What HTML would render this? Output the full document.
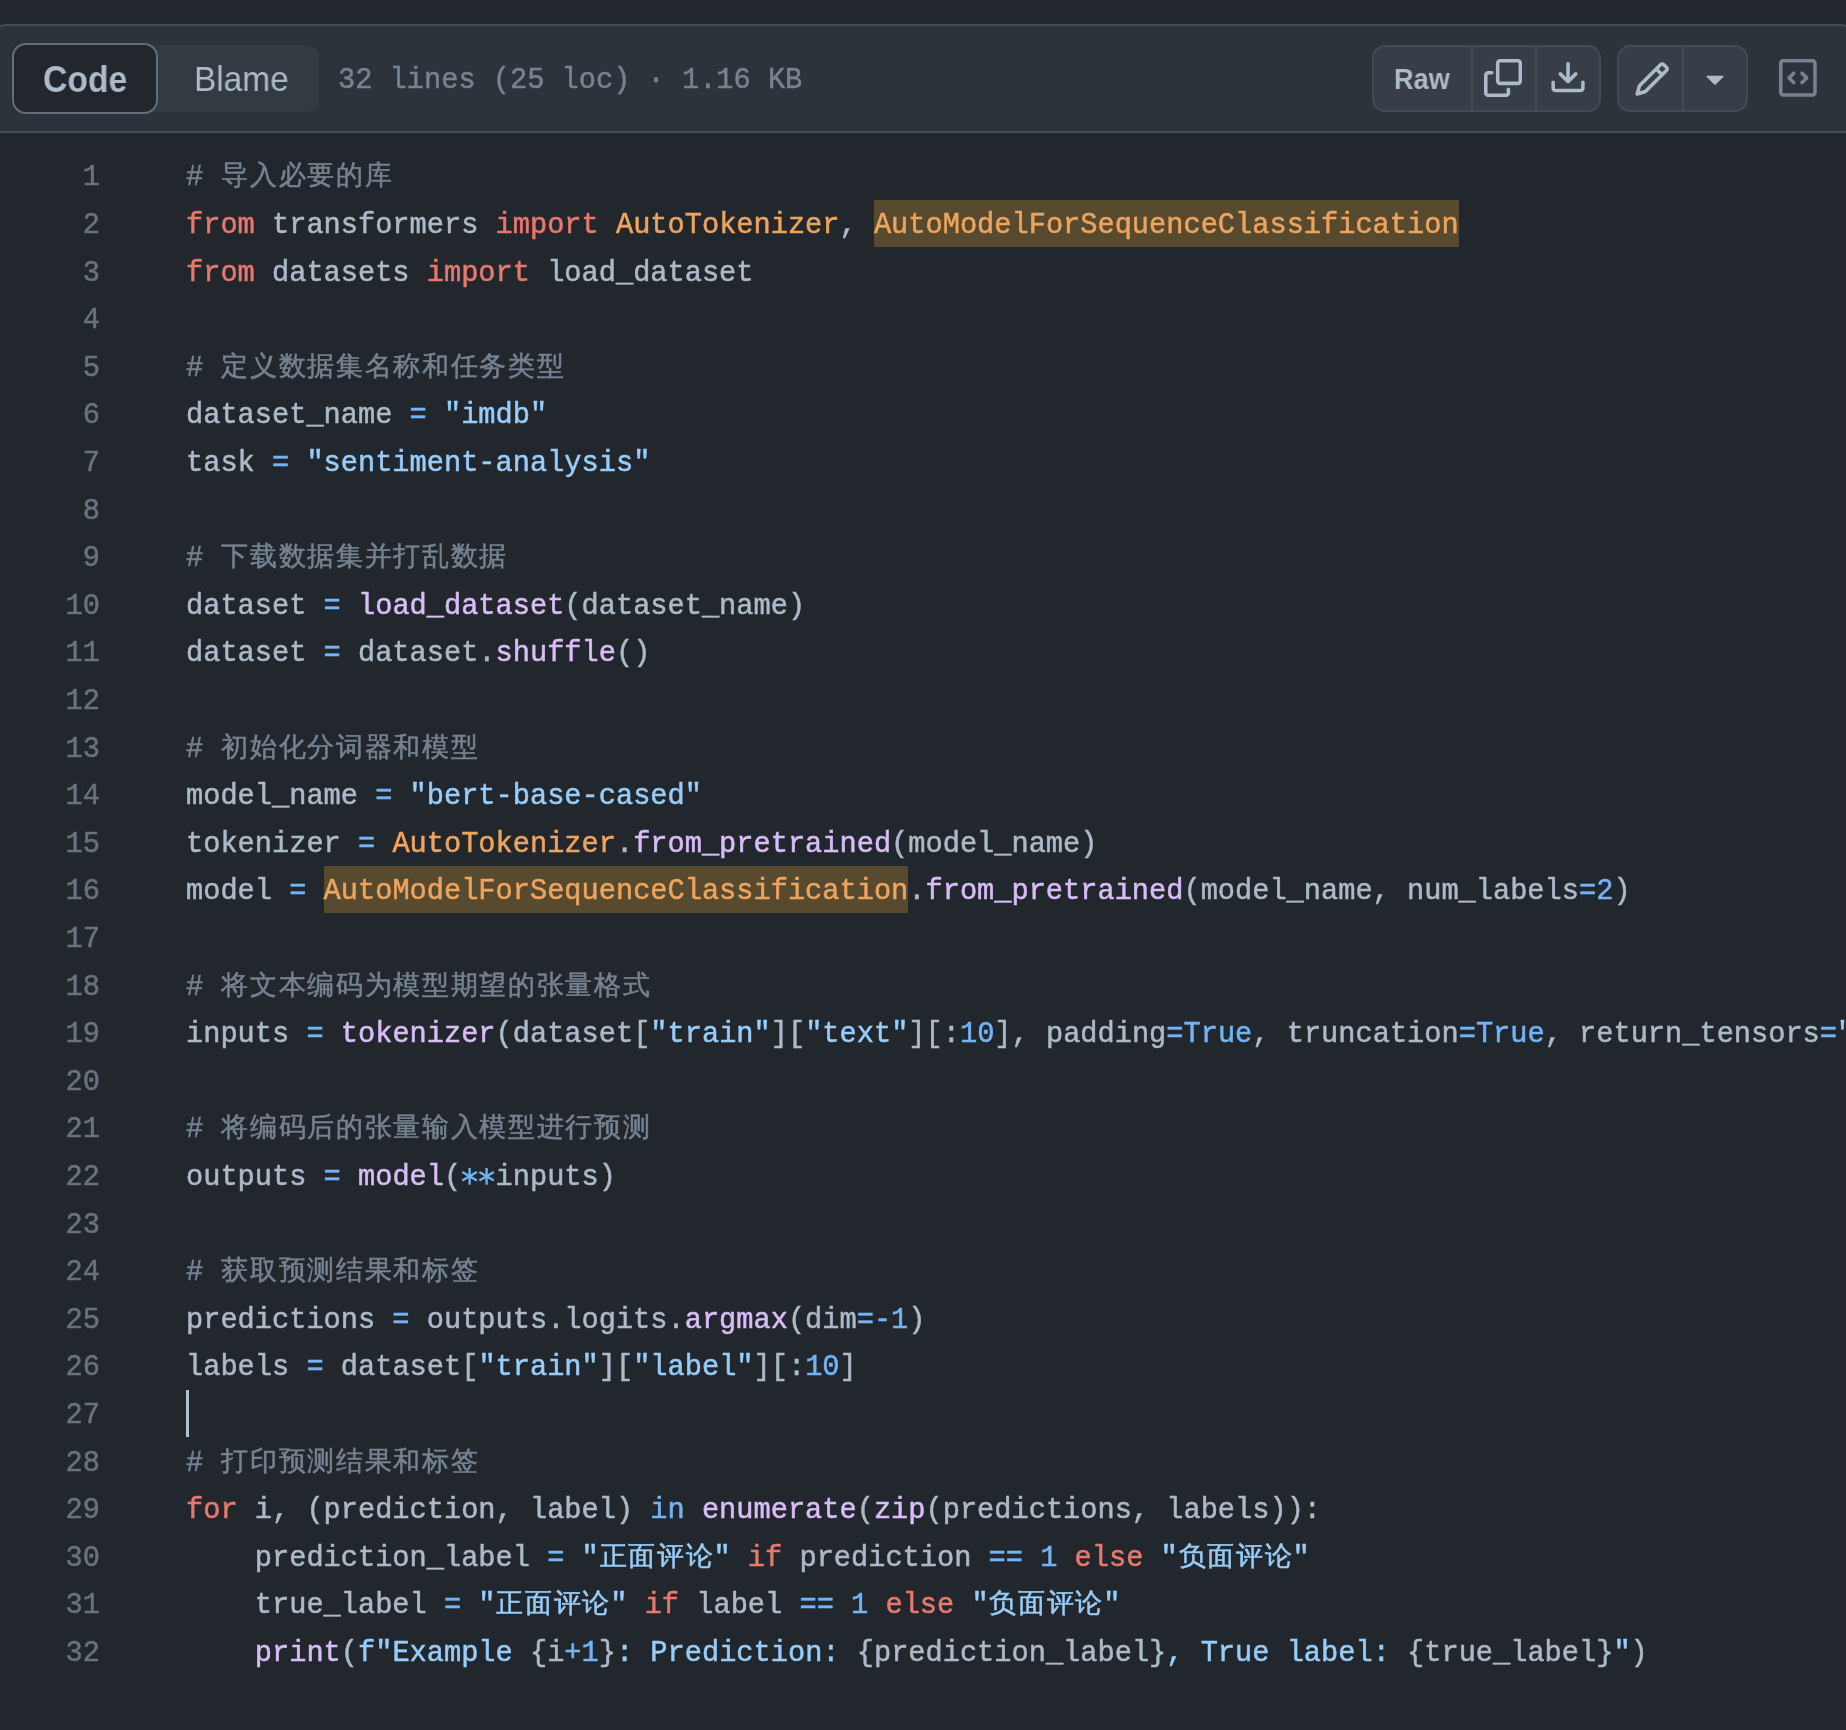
<!DOCTYPE html>
<html><head><meta charset="utf-8"><style>
html,body{margin:0;padding:0;background:#22272e;overflow:hidden}
body{width:1846px;height:1730px}
.root{width:1846px;height:1730px;background:#22272e;overflow:hidden;position:relative;font-family:"Liberation Sans",sans-serif}
.hdr{position:absolute;left:-8px;top:24px;width:1858px;height:105px;background:#2d333b;border:2px solid #444c56;border-radius:14px 14px 0 0}
.seg{position:absolute;left:12px;top:45px;width:307px;height:67px;background:#343a42;border-radius:13px}
.codebtn{position:absolute;left:12px;top:43px;width:142px;height:67px;background:#22272e;border:2px solid #636e7b;border-radius:14px}
.lbl{position:absolute;color:#adbac7;white-space:pre;line-height:1;will-change:transform}
.meta{position:absolute;left:338px;top:57px;-webkit-text-stroke:0.5px currentColor;will-change:transform;font-family:"Liberation Mono",monospace;font-size:28.667px;line-height:47.6px;color:#768390;white-space:pre}
.grp{position:absolute;top:44.5px;height:63.5px;background:#373e47;border:2px solid #444b55;border-radius:13px}
.div{position:absolute;top:46px;width:2px;height:64px;background:#444b55}
.ic{position:absolute}
.ln{position:absolute;left:0;height:47.6px;width:1846px;font-family:"Liberation Mono",monospace;font-size:28.667px;line-height:47.6px;white-space:pre;color:#adbac7;-webkit-text-stroke:0.5px currentColor;will-change:transform}
.n{position:absolute;right:1746px;top:2px;color:#6a727d}
.code{position:absolute;left:186px;top:2px}
.k{color:#e9786d} .c{color:#72b4f6} .s{color:#98cdf9} .e{color:#d9bdf6} .v{color:#eea45e} .m{color:#768390}
.hl{color:#eea45e;background:#574a2f;display:inline-block;height:47.3px;vertical-align:top;margin-top:-2px;padding-top:2px;box-sizing:border-box}
.cj{font-size:27.2px;letter-spacing:1.667px;position:relative;top:-1.2px;left:0.8px}
.ast{vertical-align:top;display:inline-block}
.cursor{position:absolute;left:186px;top:1390px;width:3px;height:47px;background:#b4bfcc}
</style></head><body><div class="root">
<div class="hdr"></div>
<div class="seg"></div>
<div class="codebtn"></div>
<div class="lbl" style="left:43px;top:61.5px;font-size:36px;font-weight:bold;transform:scaleX(0.936);transform-origin:0 0">Code</div>
<div class="lbl" style="left:194px;top:61px;font-size:35px;transform:scaleX(0.955);transform-origin:0 0">Blame</div>
<div class="meta">32 lines (25 loc) · 1.16 KB</div>
<div class="grp" style="left:1372px;width:225px"></div>
<div class="div" style="left:1470.5px"></div>
<div class="div" style="left:1534.5px"></div>
<div class="lbl" style="left:1394px;top:64px;font-size:29.5px;font-weight:bold;transform:scaleX(0.92);transform-origin:0 0">Raw</div>
<svg class="ic" style="left:1484.2px;top:59.4px;width:38.08px;height:38.08px" viewBox="0 0 16 16" fill="#adbac7"><path d="M0 6.75C0 5.784.784 5 1.75 5h1.5a.75.75 0 0 1 0 1.5h-1.5a.25.25 0 0 0-.25.25v7.5c0 .138.112.25.25.25h7.5a.25.25 0 0 0 .25-.25v-1.5a.75.75 0 0 1 1.5 0v1.5A1.75 1.75 0 0 1 9.25 16h-7.5A1.75 1.75 0 0 1 0 14.25Z"/><path d="M5 1.75C5 .784 5.784 0 6.75 0h7.5C15.216 0 16 .784 16 1.75v7.5A1.75 1.75 0 0 1 14.25 11h-7.5A1.75 1.75 0 0 1 5 9.25Zm1.75-.25a.25.25 0 0 0-.25.25v7.5c0 .138.112.25.25.25h7.5a.25.25 0 0 0 .25-.25v-7.5a.25.25 0 0 0-.25-.25Z"/></svg>
<svg class="ic" style="left:1548.6px;top:59.1px;width:38.08px;height:38.08px" viewBox="0 0 16 16" fill="#adbac7"><path d="M2.75 14A1.75 1.75 0 0 1 1 12.25v-2.5a.75.75 0 0 1 1.5 0v2.5c0 .138.112.25.25.25h10.5a.25.25 0 0 0 .25-.25v-2.5a.75.75 0 0 1 1.5 0v2.5A1.75 1.75 0 0 1 13.25 14Z"/><path d="M7.25 7.689V2a.75.75 0 0 1 1.5 0v5.689l1.97-1.969a.749.749 0 1 1 1.06 1.06l-3.25 3.25a.749.749 0 0 1-1.060 0L4.22 6.78a.749.749 0 1 1 1.06-1.06l1.97 1.969Z"/></svg>
<div class="grp" style="left:1617px;width:127px"></div>
<div class="div" style="left:1682px"></div>
<svg class="ic" style="left:1632.5px;top:59.5px;width:38.08px;height:38.08px" viewBox="0 0 16 16" fill="#adbac7"><path d="M11.013 1.427a1.75 1.75 0 0 1 2.474 0l1.086 1.086a1.75 1.75 0 0 1 0 2.474l-8.61 8.61c-.21.21-.47.364-.756.445l-3.251.93a.75.75 0 0 1-.927-.928l.929-3.25c.081-.286.235-.547.445-.758l8.61-8.61Zm.176 4.823L9.75 4.81l-6.286 6.287a.253.253 0 0 0-.064.108l-.558 1.953 1.953-.558a.253.253 0 0 0 .108-.064Zm1.238-3.763a.25.25 0 0 0-.354 0L10.811 3.75l1.439 1.44 1.263-1.263a.25.25 0 0 0 0-.354Z"/></svg>
<svg class="ic" style="left:1695.6px;top:58.9px;width:38.08px;height:38.08px" viewBox="0 0 16 16" fill="#adbac7"><path d="m4.427 7.427 3.396 3.396a.25.25 0 0 0 .354 0l3.396-3.396A.25.25 0 0 0 11.396 7H4.604a.25.25 0 0 0-.177.427Z"/></svg>
<svg class="ic" style="left:1779.2px;top:59.4px;width:37.76px;height:37.76px" viewBox="0 0 16 16" fill="#768390"><path d="M0 1.75C0 .784.784 0 1.75 0h12.5C15.216 0 16 .784 16 1.75v12.5A1.75 1.75 0 0 1 14.25 16H1.75A1.75 1.75 0 0 1 0 14.25Zm1.75-.25a.25.25 0 0 0-.25.25v12.5c0 .138.112.25.25.25h12.5a.25.25 0 0 0 .25-.25V1.75a.25.25 0 0 0-.25-.25Zm7.47 3.970a.75.75 0 0 1 1.06 0l2 2a.75.75 0 0 1 0 1.06l-2 2a.749.749 0 0 1-1.275-.326.749.749 0 0 1 .215-.734L10.69 8 9.22 6.53a.75.75 0 0 1 0-1.06ZM6.78 6.53 5.31 8l1.47 1.47a.749.749 0 0 1-.326 1.275.749.749 0 0 1-.734-.215l-2-2a.75.75 0 0 1 0-1.06l2-2a.751.751 0 0 1 1.042.018.751.751 0 0 1 .018 1.042Z"/></svg>
<div class="ln" style="top:152.40px"><span class="n">1</span><span class="code"><span class="m"># <span class="cj">导入必要的库</span></span></span></div>
<div class="ln" style="top:200.00px"><span class="n">2</span><span class="code"><span class="k">from</span> transformers <span class="k">import</span> <span class="v">AutoTokenizer</span>, <span class="hl">AutoModelForSequenceClassification</span></span></div>
<div class="ln" style="top:247.60px"><span class="n">3</span><span class="code"><span class="k">from</span> datasets <span class="k">import</span> load_dataset</span></div>
<div class="ln" style="top:295.20px"><span class="n">4</span><span class="code"></span></div>
<div class="ln" style="top:342.80px"><span class="n">5</span><span class="code"><span class="m"># <span class="cj">定义数据集名称和任务类型</span></span></span></div>
<div class="ln" style="top:390.40px"><span class="n">6</span><span class="code">dataset_name <span class="c">=</span> <span class="s">"imdb"</span></span></div>
<div class="ln" style="top:438.00px"><span class="n">7</span><span class="code">task <span class="c">=</span> <span class="s">"sentiment-analysis"</span></span></div>
<div class="ln" style="top:485.60px"><span class="n">8</span><span class="code"></span></div>
<div class="ln" style="top:533.20px"><span class="n">9</span><span class="code"><span class="m"># <span class="cj">下载数据集并打乱数据</span></span></span></div>
<div class="ln" style="top:580.80px"><span class="n">10</span><span class="code">dataset <span class="c">=</span> <span class="e">load_dataset</span>(dataset_name)</span></div>
<div class="ln" style="top:628.40px"><span class="n">11</span><span class="code">dataset <span class="c">=</span> dataset.<span class="e">shuffle</span>()</span></div>
<div class="ln" style="top:676.00px"><span class="n">12</span><span class="code"></span></div>
<div class="ln" style="top:723.60px"><span class="n">13</span><span class="code"><span class="m"># <span class="cj">初始化分词器和模型</span></span></span></div>
<div class="ln" style="top:771.20px"><span class="n">14</span><span class="code">model_name <span class="c">=</span> <span class="s">"bert-base-cased"</span></span></div>
<div class="ln" style="top:818.80px"><span class="n">15</span><span class="code">tokenizer <span class="c">=</span> <span class="v">AutoTokenizer</span>.<span class="e">from_pretrained</span>(model_name)</span></div>
<div class="ln" style="top:866.40px"><span class="n">16</span><span class="code">model <span class="c">=</span> <span class="hl">AutoModelForSequenceClassification</span>.<span class="e">from_pretrained</span>(model_name, num_labels<span class="c">=</span><span class="c">2</span>)</span></div>
<div class="ln" style="top:914.00px"><span class="n">17</span><span class="code"></span></div>
<div class="ln" style="top:961.60px"><span class="n">18</span><span class="code"><span class="m"># <span class="cj">将文本编码为模型期望的张量格式</span></span></span></div>
<div class="ln" style="top:1009.20px"><span class="n">19</span><span class="code">inputs <span class="c">=</span> <span class="e">tokenizer</span>(dataset[<span class="s">"train"</span>][<span class="s">"text"</span>][:<span class="c">10</span>], padding<span class="c">=</span><span class="c">True</span>, truncation<span class="c">=</span><span class="c">True</span>, return_tensors<span class="c">=</span><span class="s">"pt")</span></span></div>
<div class="ln" style="top:1056.80px"><span class="n">20</span><span class="code"></span></div>
<div class="ln" style="top:1104.40px"><span class="n">21</span><span class="code"><span class="m"># <span class="cj">将编码后的张量输入模型进行预测</span></span></span></div>
<div class="ln" style="top:1152.00px"><span class="n">22</span><span class="code">outputs <span class="c">=</span> <span class="e">model</span>(<span class="c"><svg class="ast" width="17.2" height="47.6" viewBox="0 0 17.2 47.6"><g stroke="#72b4f6" stroke-width="2.3" stroke-linecap="butt"><line x1="8.6" y1="13.9" x2="8.6" y2="30.7"/><line x1="1.33" y1="18.1" x2="15.87" y2="26.5"/><line x1="1.33" y1="26.5" x2="15.87" y2="18.1"/></g></svg><svg class="ast" width="17.2" height="47.6" viewBox="0 0 17.2 47.6"><g stroke="#72b4f6" stroke-width="2.3" stroke-linecap="butt"><line x1="8.6" y1="13.9" x2="8.6" y2="30.7"/><line x1="1.33" y1="18.1" x2="15.87" y2="26.5"/><line x1="1.33" y1="26.5" x2="15.87" y2="18.1"/></g></svg></span>inputs)</span></div>
<div class="ln" style="top:1199.60px"><span class="n">23</span><span class="code"></span></div>
<div class="ln" style="top:1247.20px"><span class="n">24</span><span class="code"><span class="m"># <span class="cj">获取预测结果和标签</span></span></span></div>
<div class="ln" style="top:1294.80px"><span class="n">25</span><span class="code">predictions <span class="c">=</span> outputs.logits.<span class="e">argmax</span>(dim<span class="c">=-1</span>)</span></div>
<div class="ln" style="top:1342.40px"><span class="n">26</span><span class="code">labels <span class="c">=</span> dataset[<span class="s">"train"</span>][<span class="s">"label"</span>][:<span class="c">10</span>]</span></div>
<div class="ln" style="top:1390.00px"><span class="n">27</span><span class="code"></span></div>
<div class="ln" style="top:1437.60px"><span class="n">28</span><span class="code"><span class="m"># <span class="cj">打印预测结果和标签</span></span></span></div>
<div class="ln" style="top:1485.20px"><span class="n">29</span><span class="code"><span class="k">for</span> i, (prediction, label) <span class="c">in</span> <span class="e">enumerate</span>(<span class="e">zip</span>(predictions, labels)):</span></div>
<div class="ln" style="top:1532.80px"><span class="n">30</span><span class="code">    prediction_label <span class="c">=</span> <span class="s">"<span class="cj">正面评论</span>"</span> <span class="k">if</span> prediction <span class="c">==</span> <span class="c">1</span> <span class="k">else</span> <span class="s">"<span class="cj">负面评论</span>"</span></span></div>
<div class="ln" style="top:1580.40px"><span class="n">31</span><span class="code">    true_label <span class="c">=</span> <span class="s">"<span class="cj">正面评论</span>"</span> <span class="k">if</span> label <span class="c">==</span> <span class="c">1</span> <span class="k">else</span> <span class="s">"<span class="cj">负面评论</span>"</span></span></div>
<div class="ln" style="top:1628.00px"><span class="n">32</span><span class="code">    <span class="e">print</span>(<span class="s">f"Example </span>{i<span class="c">+</span><span class="c">1</span>}<span class="s">: Prediction: </span>{prediction_label}<span class="s">, True label: </span>{true_label}<span class="s">"</span>)</span></div>
<div class="cursor"></div>
</div></body></html>
